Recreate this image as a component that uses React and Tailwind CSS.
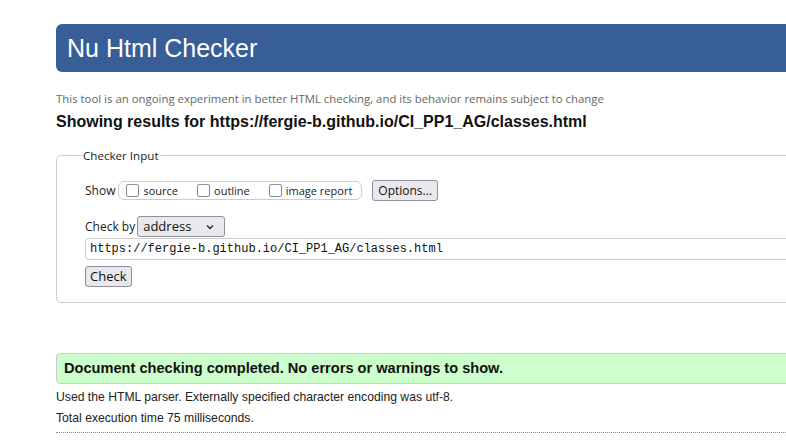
export default function App() {
  const ui = { fontFamily: '"Open Sans", "Noto Sans", sans-serif' };
  const arial = { fontFamily: '"Liberation Sans", Arial, sans-serif' };
  const mono = { fontFamily: '"Liberation Mono", "DejaVu Sans Mono", monospace' };

  return (
    <div className="w-[786px] h-[442px] overflow-hidden bg-white">
      <div className="ml-[56px] w-[900px] pt-[24px]">
        {/* header */}
        <div className="h-[48px] bg-[#375e97] rounded-l-[6px] flex items-center pl-[11px]">
          <h1 className="text-white text-[25px] leading-none" style={arial}>Nu Html Checker</h1>
        </div>

        <p className="mt-[20px] text-[11.4px] text-[#666] leading-[14px]" style={ui}>
          This tool is an ongoing experiment in better HTML checking, and its behavior remains subject to change
        </p>
        <h2 className="mt-[6px] text-[16px] font-bold text-[#111] leading-[20px]" style={arial}>
          Showing results for https://fergie-b.github.io/CI_PP1_AG/classes.html
        </h2>

        {/* checker input fieldset */}
        <fieldset className="mt-[15px] border border-[#ccc] rounded-[5px] pl-[28px] pb-[15px] pt-[16px]" style={ui}>
          <legend className="ml-[-2px] px-[0px] text-[11.6px] text-[#222]">Checker Input</legend>
          <div className="flex items-center text-[12px] text-[#222]">
            <span>Show</span>
            <div className="ml-[3px] flex items-center h-[19px] border border-[#ccc] rounded-[6px] pl-[7px] pr-[9px] text-[11px]">
              <label className="flex items-center">
                <span className="w-[13px] h-[13px] border border-[#8b8b93] rounded-[2px] bg-white"></span>
                <span className="ml-[4px]">source</span>
              </label>
              <label className="flex items-center ml-[19px]">
                <span className="w-[13px] h-[13px] border border-[#8b8b93] rounded-[2px] bg-white"></span>
                <span className="ml-[4px]">outline</span>
              </label>
              <label className="flex items-center ml-[19px]">
                <span className="w-[13px] h-[13px] border border-[#8b8b93] rounded-[2px] bg-white"></span>
                <span className="ml-[4px]">image report</span>
              </label>
            </div>
            <button className="ml-[10px] h-[21px] px-[5px] border border-[#8f8f9d] rounded-[3px] bg-[#e9e9ed] text-[12px] text-[#111]">
              Options...
            </button>
          </div>

          <div className="mt-[15px] flex items-center text-[12px] text-[#222]">
            <span>Check by</span>
            <div className="ml-[2px] w-[88px] h-[21px] border border-[#8f8f9d] rounded-[3px] bg-[#e9e9ed] flex items-center justify-between px-[5px] text-[13px] text-[#111]">
              <span>address</span>
              <svg width="10" height="10" viewBox="0 0 10 10" className="mr-[4px]">
                <path d="M2 3.5 L5 6.5 L8 3.5" fill="none" stroke="#222" strokeWidth="1.3" />
              </svg>
            </div>
          </div>

          <div className="mt-[1px] h-[22px] border border-[#ccc] rounded-l-[4px] flex items-center pl-[4px] text-[12px] text-[#111]" style={mono}>
            https://fergie-b.github.io/CI_PP1_AG/classes.html
          </div>

          <button className="mt-[6px] h-[21px] px-[4px] border border-[#8f8f9d] rounded-[3px] bg-[#e9e9ed] text-[13px] text-[#111]">
            Check
          </button>
        </fieldset>

        {/* result */}
        <div className="mt-[50px] h-[31px] bg-[#ccffcc] border border-[#ccc] rounded-l-[4px] flex items-center pl-[7px]" style={arial}>
          <span className="text-[14.6px] font-bold text-[#111]">Document checking completed. No errors or warnings to show.</span>
        </div>
        <p className="mt-[5px] text-[12.2px] text-[#222] leading-[16px]" style={arial}>
          Used the HTML parser. Externally specified character encoding was utf-8.
        </p>
        <p className="mt-[5px] text-[12.2px] text-[#222] leading-[16px]" style={arial}>
          Total execution time 75 milliseconds.
        </p>
        <div className="mt-[6px] border-t border-dotted border-[#888]"></div>
      </div>
    </div>
  );
}
